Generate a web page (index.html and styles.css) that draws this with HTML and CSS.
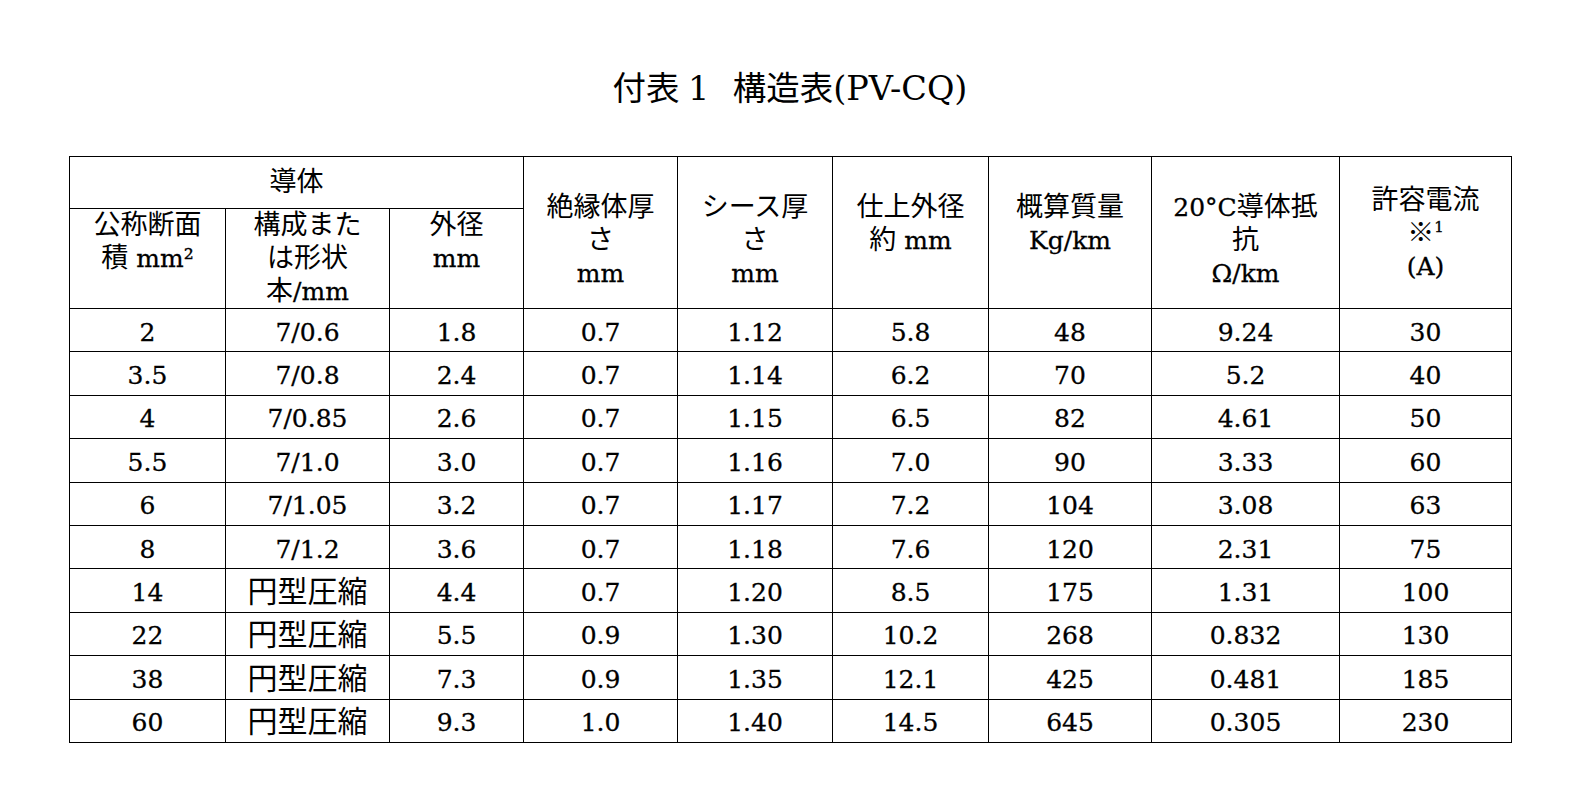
FILE: index.html
```html
<!DOCTYPE html>
<html lang="ja">
<head>
<meta charset="utf-8">
<title>付表1 構造表(PV-CQ)</title>
<link rel="stylesheet" href="styles.css">
</head>
<body>
<h1 class="title">付表&#8197;1&ensp;&thinsp;構造表(PV-CQ)</h1>
<table class="spec">
  <colgroup>
    <col class="w1"><col class="w2"><col class="w3"><col class="w4"><col class="w5"><col class="w6"><col class="w7"><col class="w8"><col class="w9">
  </colgroup>
  <thead>
    <tr class="hrow1">
      <th colspan="3" class="group"><span class="jp">導体</span></th>
      <th rowspan="2" class="tall"><span class="jp">絶縁体厚</span><br><span class="jp">さ</span><br>mm</th>
      <th rowspan="2" class="tall"><span class="jp">シース厚</span><br><span class="jp">さ</span><br>mm</th>
      <th rowspan="2" class="tall"><span class="jp">仕上外径</span><br><span class="jp">約</span> mm</th>
      <th rowspan="2" class="tall"><span class="jp">概算質量</span><br>Kg/km</th>
      <th rowspan="2" class="tall">20°C<span class="jp">導体抵</span><br><span class="jp">抗</span><br>Ω/km</th>
      <th rowspan="2" class="tall amp"><span class="jp">許容電流</span><br><span class="jp">※</span><sup class="note">1</sup><br>(A)</th>
    </tr>
    <tr class="hrow2">
      <th class="sub"><span class="jp">公称断面</span><br><span class="jp">積</span> mm²</th>
      <th class="sub"><span class="jp">構成また</span><br><span class="jp">は形状</span><br><span class="jp">本</span>/mm</th>
      <th class="sub"><span class="jp">外径</span><br>mm</th>
    </tr>
  </thead>
  <tbody>
    <tr><td>2</td><td>7/0.6</td><td>1.8</td><td>0.7</td><td>1.12</td><td>5.8</td><td>48</td><td>9.24</td><td>30</td></tr>
    <tr><td>3.5</td><td>7/0.8</td><td>2.4</td><td>0.7</td><td>1.14</td><td>6.2</td><td>70</td><td>5.2</td><td>40</td></tr>
    <tr><td>4</td><td>7/0.85</td><td>2.6</td><td>0.7</td><td>1.15</td><td>6.5</td><td>82</td><td>4.61</td><td>50</td></tr>
    <tr><td>5.5</td><td>7/1.0</td><td>3.0</td><td>0.7</td><td>1.16</td><td>7.0</td><td>90</td><td>3.33</td><td>60</td></tr>
    <tr><td>6</td><td>7/1.05</td><td>3.2</td><td>0.7</td><td>1.17</td><td>7.2</td><td>104</td><td>3.08</td><td>63</td></tr>
    <tr><td>8</td><td>7/1.2</td><td>3.6</td><td>0.7</td><td>1.18</td><td>7.6</td><td>120</td><td>2.31</td><td>75</td></tr>
    <tr><td>14</td><td><span class="jpb">円型圧縮</span></td><td>4.4</td><td>0.7</td><td>1.20</td><td>8.5</td><td>175</td><td>1.31</td><td>100</td></tr>
    <tr><td>22</td><td><span class="jpb">円型圧縮</span></td><td>5.5</td><td>0.9</td><td>1.30</td><td>10.2</td><td>268</td><td>0.832</td><td>130</td></tr>
    <tr><td>38</td><td><span class="jpb">円型圧縮</span></td><td>7.3</td><td>0.9</td><td>1.35</td><td>12.1</td><td>425</td><td>0.481</td><td>185</td></tr>
    <tr><td>60</td><td><span class="jpb">円型圧縮</span></td><td>9.3</td><td>1.0</td><td>1.40</td><td>14.5</td><td>645</td><td>0.305</td><td>230</td></tr>
  </tbody>
</table>
</body>
</html>
```
FILE: styles.css
```css
html, body {
  margin: 0;
  padding: 0;
  background: #fff;
  color: #000;
  font-family: "DejaVu Serif", "Noto Sans CJK JP", serif;
}

.title {
  margin: 0;
  padding-top: 69px;
  height: 40px;
  line-height: 40px;
  font-size: 33.5px;
  font-weight: normal;
  text-align: center;
}

.spec {
  margin: 47px 0 0 69px;
  border-collapse: collapse;
  table-layout: fixed;
  width: 1442px;
  font-size: 25px;
  -webkit-text-stroke: 0.3px #000;
}

.w1 { width: 156px; }
.w2 { width: 164px; }
.w3 { width: 134px; }
.w4 { width: 154px; }
.w5 { width: 155px; }
.w6 { width: 156px; }
.w7 { width: 163px; }
.w8 { width: 188px; }
.w9 { width: 172px; }

.spec th,
.spec td {
  border: 1px solid #000;
  padding: 0;
  text-align: center;
  font-weight: normal;
}

.spec th {
  vertical-align: top;
  line-height: 33px;
}

.hrow1 { height: 52px; }
.hrow2 { height: 100px; }

.spec th.group {
  vertical-align: middle;
}

.spec th.sub {
  padding-top: 0;
}

.spec th.tall {
  padding-top: 34px;
}

.spec th.tall.amp {
  padding-top: 27px;
}

.jp {
  font-size: 27px;
  line-height: 1;
  -webkit-text-stroke: 0;
}

.note {
  font-size: 15px;
  line-height: 0;
  vertical-align: 10px;
}

.spec tbody tr {
  height: 43.4px;
}

.spec td {
  vertical-align: middle;
  padding-top: 5px;
  line-height: 30px;
}

.jpb {
  font-size: 30px;
  line-height: 1;
  -webkit-text-stroke: 0;
}
```
